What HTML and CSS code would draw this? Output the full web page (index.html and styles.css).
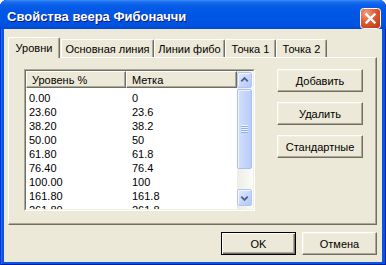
FILE: index.html
```html
<!DOCTYPE html>
<html lang="ru">
<head>
<meta charset="utf-8">
<title>Свойства веера Фибоначчи</title>
<link rel="stylesheet" href="styles.css">
</head>
<body>
<div class="window">
  <div class="titlebar">
    <span class="title">Свойства веера Фибоначчи</span>
    <div class="close">
      <svg width="21" height="21" viewBox="0 0 21 21">
        <defs>
          <radialGradient id="cg" cx="0.3" cy="0.25" r="0.85">
            <stop offset="0" stop-color="#F4A385"/>
            <stop offset="0.45" stop-color="#E2603A"/>
            <stop offset="1" stop-color="#C23E17"/>
          </radialGradient>
        </defs>
        <rect x="0.5" y="0.5" width="20" height="20" rx="3" fill="url(#cg)" stroke="#FFFFFF"/>
        <path d="M6.5 6.5 L14.5 14.5 M14.5 6.5 L6.5 14.5" stroke="#FFFFFF" stroke-width="2.4" stroke-linecap="square"/>
      </svg>
    </div>
  </div>
  <div class="client">
    <div class="tabs">
      <div class="tab active t1">Уровни</div>
      <div class="tab t2">Основная линия</div>
      <div class="tab t3">Линии фибо</div>
      <div class="tab t4">Точка 1</div>
      <div class="tab t5">Точка 2</div>
    </div>
    <div class="panel">
      <div class="listview">
        <div class="lv-inner">
          <div class="lv-main">
            <div class="lv-header">
              <div class="hcol c1">Уровень %</div>
              <div class="hcol c2">Метка</div>
            </div>
            <div class="lv-rows">
              <div class="row"><span class="cell1">0.00</span><span class="cell2">0</span></div>
              <div class="row"><span class="cell1">23.60</span><span class="cell2">23.6</span></div>
              <div class="row"><span class="cell1">38.20</span><span class="cell2">38.2</span></div>
              <div class="row"><span class="cell1">50.00</span><span class="cell2">50</span></div>
              <div class="row"><span class="cell1">61.80</span><span class="cell2">61.8</span></div>
              <div class="row"><span class="cell1">76.40</span><span class="cell2">76.4</span></div>
              <div class="row"><span class="cell1">100.00</span><span class="cell2">100</span></div>
              <div class="row"><span class="cell1">161.80</span><span class="cell2">161.8</span></div>
              <div class="row"><span class="cell1">261.80</span><span class="cell2">261.8</span></div>
            </div>
          </div>
          <div class="scrollbar">
            <div class="sb-btn up">
              <svg width="14" height="14" viewBox="0 0 14 14"><path d="M3.5 8.5 L7 5 L10.5 8.5" fill="none" stroke="#4D6185" stroke-width="2"/></svg>
            </div>
            <div class="sb-thumb">
              <div class="grip"></div>
            </div>
            <div class="sb-btn down">
              <svg width="14" height="14" viewBox="0 0 14 14"><path d="M3.5 5.5 L7 9 L10.5 5.5" fill="none" stroke="#4D6185" stroke-width="2"/></svg>
            </div>
          </div>
        </div>
      </div>
      <div class="side">
        <button class="btn side-btn">Добавить</button>
        <button class="btn side-btn">Удалить</button>
        <button class="btn side-btn">Стандартные</button>
      </div>
    </div>
    <div class="footer">
      <button class="btn foot-btn default">OK</button>
      <button class="btn foot-btn">Отмена</button>
    </div>
  </div>
</div>
</body>
</html>
```
FILE: styles.css
```css
html, body {
  margin: 0;
  padding: 0;
}
body {
  width: 386px;
  height: 265px;
  overflow: hidden;
  background: #FFFFFF;
  font-family: "Liberation Sans", Arial, sans-serif;
  font-size: 11px;
  color: #000000;
}
.window {
  width: 386px;
  height: 265px;
  box-sizing: border-box;
  display: flex;
  flex-direction: column;
  background: #0A55DF;
  border-radius: 7px 7px 0 0;
  overflow: hidden;
  box-shadow: inset 1px 0 #0831D9, inset -1px 0 #001EA0, inset 0 -1px #001EA0, inset 2px 0 #1D6BEF;
}
.titlebar {
  flex: none;
  height: 29px;
  box-sizing: border-box;
  display: flex;
  align-items: center;
  justify-content: space-between;
  padding: 3px 5px 0 7px;
  background: linear-gradient(to bottom, #3C8EF8 0px, #1A6EF0 2px, #0A5FE8 5px, #0058E6 10px, #0056E3 18px, #0052DF 25px, #0048D6 29px);
  border-radius: 7px 7px 0 0;
}
.title {
  color: #FFFFFF;
  font-weight: bold;
  font-size: 13px;
  text-shadow: 1px 1px 0 #0A1883;
  white-space: nowrap;
}
.close {
  width: 21px;
  height: 21px;
  align-self: flex-start;
  margin-top: 5px;
}
.close svg {
  display: block;
}
.client {
  flex: 1;
  margin: 0 4px 3px 4px;
  background: #ECE9D8;
  padding: 8px 5px 0 4px;
  display: flex;
  flex-direction: column;
}
.tabs {
  display: flex;
  align-items: flex-end;
  height: 20px;
}
.tab {
  box-sizing: border-box;
  height: 18px;
  border: 1px solid;
  border-color: #FFFFFF #716F64 transparent #FFFFFF;
  border-bottom: none;
  border-radius: 2px 2px 0 0;
  box-shadow: inset -1px 0 #ACA899;
  background: #ECE9D8;
  display: flex;
  align-items: center;
  justify-content: center;
  white-space: nowrap;
  padding-top: 1px;
}
.tab.active {
  height: 21px;
  margin-bottom: -1px;
  position: relative;
  z-index: 1;
  margin-right: 1px;
  padding-top: 0;
}
.t1 { width: 52px; }
.t2 { width: 93px; }
.t3 { width: 71px; }
.t4 { width: 51px; }
.t5 { width: 51px; }
.panel {
  box-sizing: border-box;
  width: 369px;
  height: 168px;
  border: 1px solid;
  border-color: #FFFFFF #716F64 #716F64 #FFFFFF;
  box-shadow: inset -1px -1px #ACA899;
  padding: 11px 0 0 15px;
  display: flex;
  align-items: flex-start;
  gap: 22px;
}
.listview {
  box-sizing: border-box;
  width: 231px;
  height: 142px;
  border: 1px solid;
  border-color: #ACA899 #FFFFFF #FFFFFF #ACA899;
}
.lv-inner {
  box-sizing: border-box;
  height: 100%;
  border: 1px solid;
  border-color: #716F64 #F1EFE2 #F1EFE2 #716F64;
  background: #FFFFFF;
  display: flex;
}
.lv-main {
  flex: 1;
  overflow: hidden;
}
.lv-header {
  display: flex;
  height: 17px;
}
.hcol {
  box-sizing: border-box;
  height: 17px;
  background: #ECE9D8;
  border: 1px solid;
  border-color: #FFFFFF #716F64 #716F64 #FFFFFF;
  box-shadow: inset -1px -1px #ACA899;
  display: flex;
  align-items: center;
  white-space: nowrap;
  padding-top: 1px;
}
.hcol.c1 {
  width: 100px;
  padding-left: 5px;
}
.hcol.c2 {
  flex: 1;
  padding-left: 5px;
}
.lv-rows {
  padding-top: 3px;
}
.row {
  display: flex;
  height: 14px;
  line-height: 14px;
  white-space: nowrap;
}
.cell1 {
  width: 100px;
  padding-left: 3px;
  box-sizing: border-box;
}
.cell2 {
  padding-left: 6px;
}
.scrollbar {
  width: 16px;
  box-sizing: border-box;
  display: flex;
  flex-direction: column;
  padding: 1px 0 3px 0;
  background: linear-gradient(to right, #EEEDE5, #FBFBF8);
}
.sb-btn {
  box-sizing: border-box;
  width: 15px;
  height: 16px;
  border: 1px solid #B1C5F4;
  border-radius: 2px;
  background: linear-gradient(to bottom right, #E2EAFE 0%, #C6D6FC 55%, #B4C8F7 100%);
  box-shadow: inset 1px 1px #F1F5FF;
  display: flex;
  align-items: center;
  justify-content: center;
}
.sb-btn.down {
  margin-top: auto;
  height: 17px;
}
.sb-btn svg {
  display: block;
}
.sb-thumb {
  box-sizing: border-box;
  width: 15px;
  height: 80px;
  margin-top: 1px;
  border: 1px solid #A9BFF1;
  border-radius: 2px;
  background: linear-gradient(to right, #D3E0FE 0%, #C6D6FC 45%, #BACDF9 100%);
  box-shadow: inset 1px 1px #EEF3FF;
  display: flex;
  align-items: center;
  justify-content: center;
}
.grip {
  width: 7px;
  height: 8px;
  background: repeating-linear-gradient(to bottom, #EEF4FE 0px, #EEF4FE 1px, #8CB0F8 1px, #8CB0F8 2px);
}
.side {
  width: 86px;
  display: flex;
  flex-direction: column;
  gap: 10px;
}
.btn {
  box-sizing: border-box;
  height: 23px;
  margin: 0;
  padding: 0;
  font-family: inherit;
  font-size: 11px;
  color: #000000;
  background: #ECE9D8;
  border: 1px solid;
  border-color: #FFFFFF #716F64 #716F64 #FFFFFF;
  box-shadow: inset -1px -1px #ACA899, inset 1px 1px #F1EFE2;
  border-radius: 0;
  text-align: center;
}
.side-btn {
  width: 86px;
}
.footer {
  display: flex;
  justify-content: flex-end;
  gap: 6px;
  margin-top: 7px;
}
.foot-btn {
  width: 75px;
}
.btn.default {
  border: 1px solid #000000;
  box-shadow: inset 1px 1px #FFFFFF, inset -1px -1px #716F64, inset -2px -2px #ACA899;
}
```
